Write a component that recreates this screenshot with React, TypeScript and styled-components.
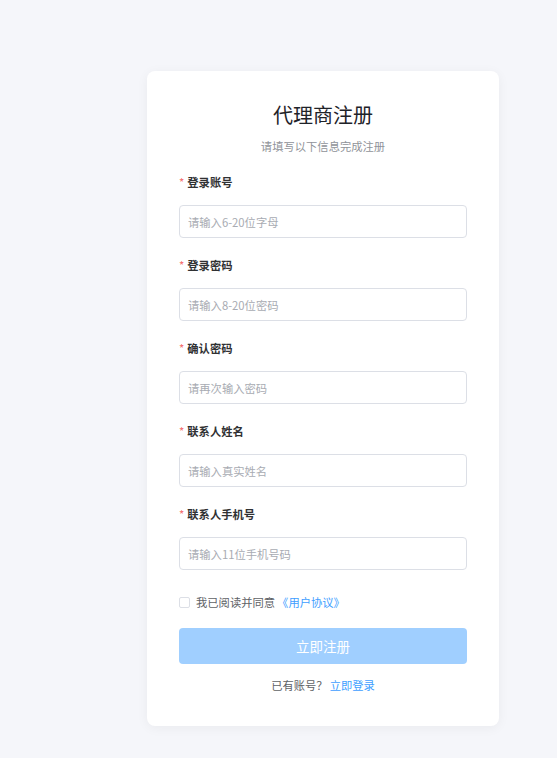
import React from "react";
import styled, { createGlobalStyle } from "styled-components";

const GlobalStyle = createGlobalStyle`
  html, body {
    margin: 0;
    padding: 0;
    background: #f5f6fa;
    font-family: "Noto Sans CJK SC", "Noto Sans", "Liberation Sans", sans-serif;
  }
  * { box-sizing: border-box; }
`;

const Page = styled.div`
  min-height: 758px;
  padding: 71px 0 0 147px;
`;

const Card = styled.div`
  width: 352px;
  background: #ffffff;
  border-radius: 8px;
  box-shadow: 0 2px 12px rgba(0, 0, 0, 0.05);
  padding: 30px 32px 31px;
  display: flex;
  flex-direction: column;
`;

const Title = styled.h1`
  margin: 0;
  font-size: 20px;
  line-height: 28px;
  font-weight: 400;
  color: #1f2329;
  text-align: center;
`;

const Subtitle = styled.p`
  margin: 8px 0 16px;
  font-size: 11.3px;
  line-height: 18px;
  color: #909399;
  text-align: center;
`;

const Field = styled.div`
  display: flex;
  flex-direction: column;
  gap: 12px;
  margin-bottom: 16px;
`;

const Label = styled.label`
  display: flex;
  align-items: center;
  height: 22px;
  font-size: 11.3px;
  font-weight: 700;
  color: #303133;
`;

const Star = styled.span`
  color: #f56c6c;
  font-weight: 400;
  margin-right: 3px;
`;

const Input = styled.input`
  width: 100%;
  height: 33px;
  border: 1px solid #dcdfe6;
  border-radius: 4px;
  padding: 0 8px;
  font-family: inherit;
  font-size: 11.3px;
  color: #303133;
  outline: none;
  background: #fff;
  &::placeholder {
    color: #a8abb2;
  }
`;

const AgreeRow = styled.div`
  display: flex;
  align-items: center;
  height: 20px;
  margin-top: 6px;
  font-size: 11.3px;
  color: #606266;
`;

const CheckBox = styled.span`
  width: 11px;
  height: 11px;
  border: 1px solid #dcdfe6;
  border-radius: 2px;
  margin-right: 6px;
  background: #fff;
`;

const Link = styled.a`
  color: #409eff;
  text-decoration: none;
  margin-left: ${(p: { $gap?: number }) => p.$gap ?? 0}px;
`;

const SubmitButton = styled.button`
  margin-top: 16px;
  height: 36px;
  width: 100%;
  border: none;
  border-radius: 4px;
  background: #a0cfff;
  color: #ffffff;
  font-family: inherit;
  font-size: 13.5px;
  cursor: not-allowed;
`;

const Footer = styled.div`
  margin-top: 11px;
  text-align: center;
  font-size: 11.3px;
  line-height: 20px;
  color: #606266;
`;

const fields = [
  { label: "登录账号", placeholder: "请输入6-20位字母" },
  { label: "登录密码", placeholder: "请输入8-20位密码" },
  { label: "确认密码", placeholder: "请再次输入密码" },
  { label: "联系人姓名", placeholder: "请输入真实姓名" },
  { label: "联系人手机号", placeholder: "请输入11位手机号码" },
];

export default function App() {
  return (
    <>
      <GlobalStyle />
      <Page>
        <Card>
          <Title>代理商注册</Title>
          <Subtitle>请填写以下信息完成注册</Subtitle>
          {fields.map((f) => (
            <Field key={f.label}>
              <Label>
                <Star>*</Star>
                {f.label}
              </Label>
              <Input placeholder={f.placeholder} />
            </Field>
          ))}
          <AgreeRow>
            <CheckBox />
            我已阅读并同意
            <Link $gap={2}>《用户协议》</Link>
          </AgreeRow>
          <SubmitButton>立即注册</SubmitButton>
          <Footer>
            已有账号？<Link $gap={2}>立即登录</Link>
          </Footer>
        </Card>
      </Page>
    </>
  );
}
